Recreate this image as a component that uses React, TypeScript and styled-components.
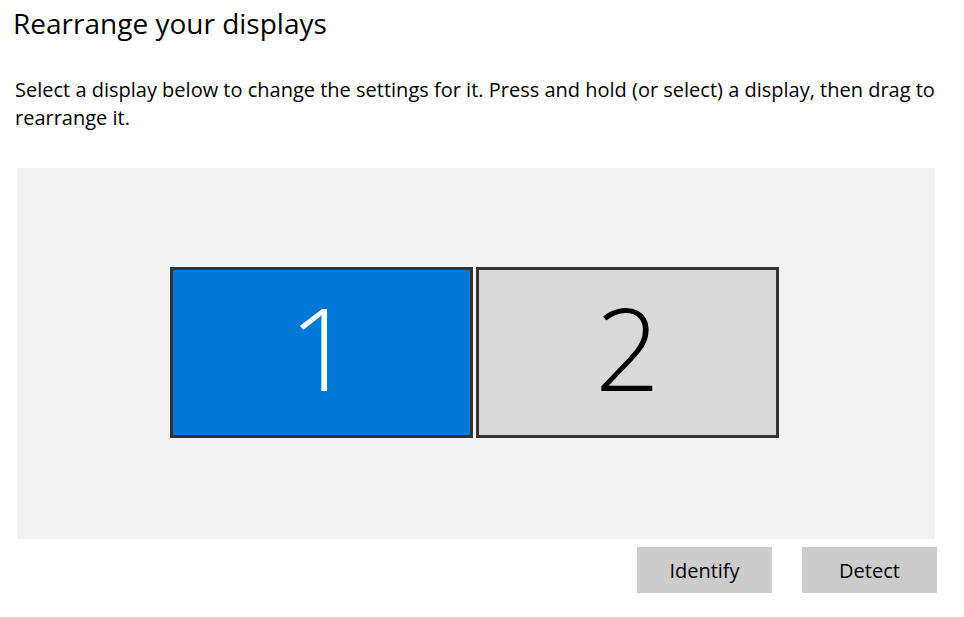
import React from 'react';
import styled, { createGlobalStyle } from 'styled-components';

const GlobalStyle = createGlobalStyle`
  html, body {
    margin: 0;
    padding: 0;
    background: #fff;
  }
  body {
    font-family: 'Open Sans', 'Noto Sans', sans-serif;
    color: #000;
  }
`;

const Page = styled.div`
  width: 964px;
  height: 617px;
  padding: 0 27px 0 13px;
  box-sizing: border-box;
  display: flex;
  flex-direction: column;
  overflow: hidden;
`;

const Title = styled.h1`
  margin: 3px 0 0 0;
  font-size: 28px;
  font-weight: 400;
  line-height: 40px;
`;

const Description = styled.p`
  margin: 33px 0 0 2px;
  font-size: 20px;
  line-height: 28px;
`;

const Canvas = styled.div`
  margin: 36px 0 0 4px;
  width: 918px;
  height: 371px;
  background: #f2f2f2;
  display: flex;
  justify-content: flex-start;
  align-items: flex-start;
  padding: 99px 0 0 153px;
  box-sizing: border-box;
  gap: 3px;
`;

type MonitorProps = {
  active?: boolean;
};

const Monitor = styled.div<MonitorProps>`
  width: 303px;
  height: 171px;
  box-sizing: border-box;
  border: 3px solid #333333;
  padding-bottom: 11px;
  background: ${(props) => (props.active ? '#0078d7' : '#d9d9d9')};
  color: ${(props) => (props.active ? '#fff' : '#000')};
  display: flex;
  align-items: center;
  justify-content: center;
  font-size: 114px;
  font-weight: 300;
  line-height: 1;
`;

const ButtonRow = styled.div`
  display: flex;
  justify-content: flex-end;
  gap: 30px;
  margin-top: 8px;
`;

const Button = styled.button`
  width: 135px;
  height: 46px;
  border: none;
  background: #cccccc;
  font-family: 'Open Sans', 'Noto Sans', sans-serif;
  font-size: 20px;
  color: #000;
  padding: 0;
`;

const displays = [
  { id: 1, active: true },
  { id: 2, active: false },
];

const App = () => {
  return (
    <>
      <GlobalStyle />
      <Page>
        <Title>Rearrange your displays</Title>
        <Description>
          Select a display below to change the settings for it. Press and hold (or select) a
          display, then drag to rearrange it.
        </Description>
        <Canvas>
          {displays.map((d) => (
            <Monitor key={d.id} active={d.active}>
              {d.id}
            </Monitor>
          ))}
        </Canvas>
        <ButtonRow>
          <Button>Identify</Button>
          <Button>Detect</Button>
        </ButtonRow>
      </Page>
    </>
  );
};

export default App;
